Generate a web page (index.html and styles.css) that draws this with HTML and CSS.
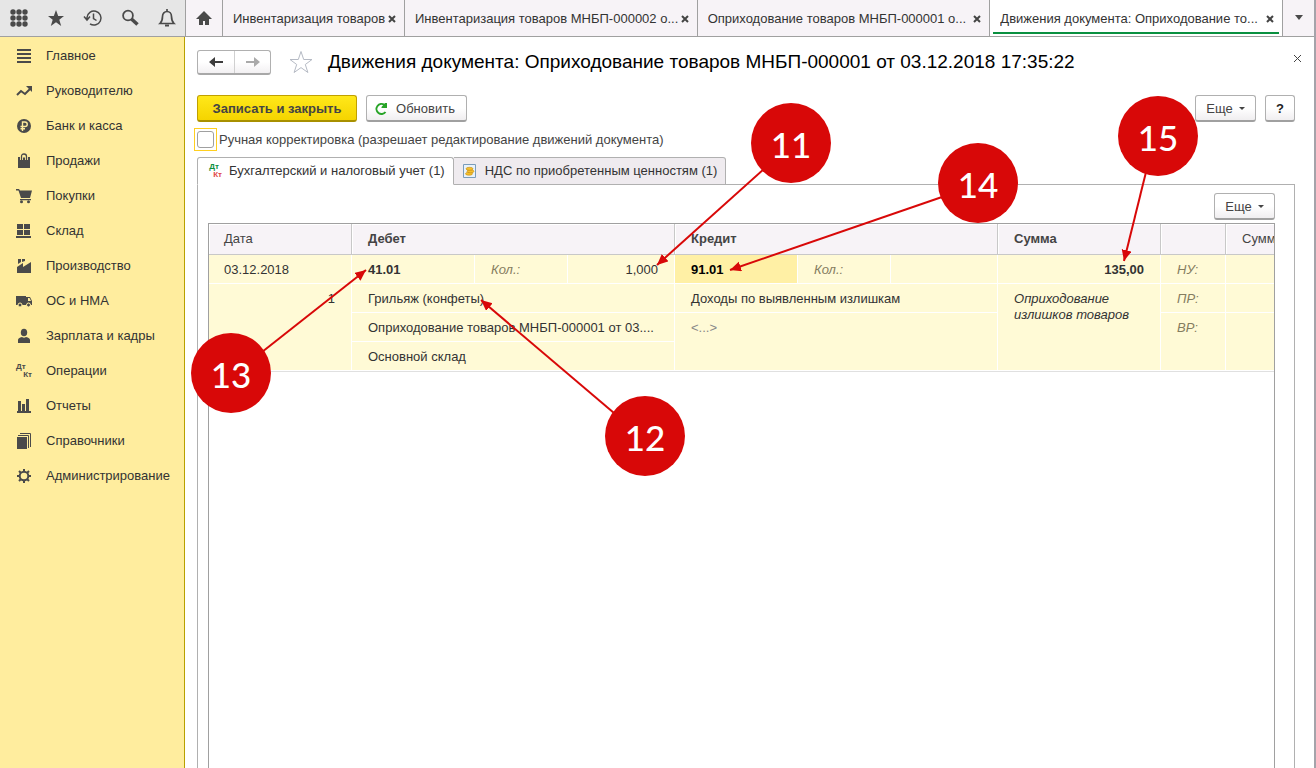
FILE: index.html
```html
<!DOCTYPE html>
<html lang="ru">
<head>
<meta charset="utf-8">
<title>Движения документа</title>
<link rel="stylesheet" href="styles.css">
</head>
<body>
<div class="window">
  <header class="topbar">
    <div class="tools">
      <button class="tool" aria-label="Меню"><svg width="20" height="20"><g fill="#4a4a4a"><circle cx="4" cy="4" r="2.700"/><circle cx="10" cy="4" r="2.700"/><circle cx="16" cy="4" r="2.700"/><circle cx="4" cy="10" r="2.700"/><circle cx="10" cy="10" r="2.700"/><circle cx="16" cy="10" r="2.700"/><circle cx="4" cy="16" r="2.700"/><circle cx="10" cy="16" r="2.700"/><circle cx="16" cy="16" r="2.700"/></g></svg></button>
      <button class="tool" aria-label="Избранное"><svg width="20" height="20"><path fill="#4a4a4a" d="M10 2l2.200 6H18l-4.700 3.700L15.200 18 10 14.200 4.800 18l1.900-6.300L2 8h5.800z"/></svg></button>
      <button class="tool" aria-label="История"><svg width="20" height="20" fill="none" stroke="#4a4a4a" stroke-width="1.500"><path d="M4 11V9.500A7 7 0 1 1 7 15.800M1 8.500l3 3.500 3-3.500M10.500 5.500v5l3 2"/></svg></button>
      <button class="tool" aria-label="Поиск"><svg width="20" height="20" fill="none" stroke="#4a4a4a"><circle cx="8" cy="7.500" r="4.900" stroke-width="1.800"/><path stroke-width="3.500" d="M11.500 11l6 5.500"/></svg></button>
      <button class="tool" aria-label="Уведомления"><svg width="20" height="20" fill="none" stroke="#4a4a4a" stroke-width="1.700"><path d="M3 15.500h14c-2-2-2.500-3.500-2.500-7 0-3-2-5-4.500-5s-4.500 2-4.500 5c0 3.500-.5 5-2.500 7zM10 1v3"/><path d="M8 17.500h4" stroke-width="2"/></svg></button>
    </div>
    <nav class="tabs">
      <button class="tab home" aria-label="Начальная страница"><svg width="16" height="16"><path fill="#4a4a4a" d="M8 1L0 9h3v6h4v-4h2v4h4V9h3z"/></svg></button>
      <div class="tab short"><span>Инвентаризация товаров</span><button class="close" aria-label="Закрыть"><svg width="8" height="8"><path d="M1 1l6 6M7 1L1 7"/></svg></button></div>
      <div class="tab"><span>Инвентаризация товаров МНБП-000002 о...</span><button class="close" aria-label="Закрыть"><svg width="8" height="8"><path d="M1 1l6 6M7 1L1 7"/></svg></button></div>
      <div class="tab"><span>Оприходование товаров МНБП-000001 о...</span><button class="close" aria-label="Закрыть"><svg width="8" height="8"><path d="M1 1l6 6M7 1L1 7"/></svg></button></div>
      <div class="tab active"><span>Движения документа: Оприходование то...</span><button class="close" aria-label="Закрыть"><svg width="8" height="8"><path d="M1 1l6 6M7 1L1 7"/></svg></button></div>
      <button class="tab more" aria-label="Список окон"><svg width="10" height="6"><path fill="#4a4a4a" d="M1 0h8L5 5z"/></svg></button>
    </nav>
  </header>
  <div class="body">
    <aside class="sidebar">
      <a href="#"><svg width="16" height="16"><path fill="#4a4a4a" d="M1 1h14v2H1zM1 5h14v2H1zM1 9h14v2H1zM1 13h14v2H1z"/></svg>Главное</a>
      <a href="#"><svg width="16" height="16"><path fill="none" stroke="#4a4a4a" stroke-width="2" d="M1 12l4-4 4 3 5-5"/><path fill="#4a4a4a" d="M10 3h6v6z"/></svg>Руководителю</a>
      <a href="#"><svg width="16" height="16"><circle cx="8" cy="8" r="7" fill="#4a4a4a"/><path fill="none" stroke="#ffed9e" stroke-width="1.400" d="M6.500 13V4H9a2.200 2.200 0 0 1 0 4.500H4.500M4.500 10.700H9"/></svg>Банк и касса</a>
      <a href="#"><svg width="16" height="16"><path fill="#4a4a4a" d="M2 4h12v11H2z"/><path fill="none" stroke="#ffed9e" stroke-width="3" d="M5.500 7V3h5v4"/><path fill="none" stroke="#4a4a4a" stroke-width="1.300" d="M5.500 7V3.500Q5.500 1 8 1t2.500 2.500V7"/></svg>Продажи</a>
      <a href="#"><svg width="16" height="16"><path fill="#4a4a4a" d="M0 1h3l1 1.500h12L14 10H5L2.500 2.500H0zM4 11h11v1.200H4z"/><circle cx="5.500" cy="13.800" r="1.500" fill="#4a4a4a"/><circle cx="12.500" cy="13.800" r="1.500" fill="#4a4a4a"/></svg>Покупки</a>
      <a href="#"><svg width="16" height="16"><path fill="#4a4a4a" d="M1 1h6v5H1zM8 1h6v5H8zM1 7h6v5H1zM8 7h6v5H8zM0 13h15v2H0z"/></svg>Склад</a>
      <a href="#"><svg width="16" height="16"><path fill="#4a4a4a" d="M1 15V9l6-4v4l8-5v11zM2 1h3v3L2 6zM6 1h3v2L6 4z"/></svg>Производство</a>
      <a href="#"><svg width="16" height="16"><path fill="#4a4a4a" d="M0 3h10v9H0zM10 4h4l2 4v4h-6z"/><path fill="#ffed9e" d="M12 5h1.500l1.500 3h-3z"/><circle cx="4" cy="12" r="2" fill="#4a4a4a" stroke="#ffed9e"/><circle cx="12.500" cy="12" r="2" fill="#4a4a4a" stroke="#ffed9e"/></svg>ОС и НМА</a>
      <a href="#"><svg width="16" height="16"><ellipse cx="8" cy="4.500" rx="3.200" ry="3.800" fill="#4a4a4a"/><path fill="#4a4a4a" d="M2 15v-3q0-2 4-3 2 1.500 4 0 4 1 4 3v3z"/></svg>Зарплата и кадры</a>
      <a href="#"><span class="dtkt"><b>Дт</b><b>Кт</b></span>Операции</a>
      <a href="#"><svg width="16" height="16"><path fill="#4a4a4a" d="M2 3h3v11H2zM6 6h3v8H6zM10 1h3v13h-3zM1 13h14v2H1z"/></svg>Отчеты</a>
      <a href="#"><svg width="16" height="16"><path fill="#4a4a4a" d="M1 4h10v12H1z"/><path fill="none" stroke="#4a4a4a" d="M2 2.500h10.500V15M4 .5h10.500V14"/></svg>Справочники</a>
      <a href="#"><svg width="16" height="16"><g fill="none" stroke="#4a4a4a"><circle cx="8" cy="8" r="4.300" stroke-width="2"/><path stroke-width="2" d="M8 1v3M8 12v3M1 8h3M12 8h3M3 3l2 2M11 11l2 2M3 13l2-2M11 5l2-2"/></g></svg>Администрирование</a>
    </aside>
    <main class="main">
      <div class="titlebar">
        <div class="nav"><button aria-label="Назад"><svg width="14" height="12"><path fill="#3c3c3c" d="M0 6l6-5v4h8v2H6v4z"/></svg></button><button aria-label="Вперед"><svg width="14" height="12"><path fill="#aaa" d="M14 6L8 1v4H0v2h8v4z"/></svg></button></div>
        <svg class="star" width="24" height="24"><path fill="#fff" stroke="#b5bac4" d="M12 1.500l2.700 8H23l-6.700 5 2.600 8L12 17.600 5.100 22.500l2.600-8L1 9.500h8.300z"/></svg>
        <h1>Движения документа: Оприходование товаров МНБП-000001 от 03.12.2018 17:35:22</h1>
        <button class="dismiss" aria-label="Закрыть"><svg width="9" height="9"><path fill="none" stroke="#444" d="M1 1l7 7M8 1L1 8"/></svg></button>
      </div>
      <div class="commands">
        <button class="btn primary">Записать и закрыть</button>
        <button class="btn refresh"><svg width="14" height="14"><path fill="none" stroke="#28a428" stroke-width="2" d="M10.500 3A5 5 0 1 0 11.500 10"/><path fill="#28a428" d="M7.500 6V5L11 1h2v5z"/></svg>Обновить</button>
        <button class="btn drop">Еще<svg width="6" height="4"><path fill="#444" d="M0 0h6L3 3z"/></svg></button>
        <button class="btn help">?</button>
      </div>
      <label class="manual"><span class="focus"><input type="checkbox"></span>Ручная корректировка (разрешает редактирование движений документа)</label>
      <div class="pages">
        <button class="page current"><span class="dtkt color"><b>Дт</b><b>Кт</b></span>Бухгалтерский и налоговый учет (1)</button>
        <button class="page"><svg width="14" height="14"><path fill="#e8f2fa" stroke="#7a9cba" d="M.5.500h12v13H.5z"/><g fill="#f5c02c" stroke="#c48a12" stroke-width=".6"><ellipse cx="6" cy="9.700" rx="3.500" ry="1.500"/><ellipse cx="7.500" cy="7.300" rx="3.500" ry="1.500"/><ellipse cx="6.500" cy="4.800" rx="3.500" ry="1.500"/></g></svg>НДС по приобретенным ценностям (1)</button>
      </div>
      <section class="panel">
        <div class="gridbar"><button class="btn drop">Еще<svg width="6" height="4"><path fill="#444" d="M0 0h6L3 3z"/></svg></button></div>
        <div class="grid">
          <table>
            <colgroup><col class="c-date"><col class="c-acc"><col class="c-qty"><col class="c-val"><col class="c-acc"><col class="c-qty"><col class="c-val"><col class="c-sum"><col class="c-kind"><col></colgroup>
            <thead><tr><th class="plain">Дата</th><th colspan="3">Дебет</th><th colspan="3">Кредит</th><th>Сумма</th><th></th><th class="plain last">Сумм</th></tr></thead>
            <tbody>
              <tr><td>03.12.2018</td><td class="bold">41.01</td><td class="hint">Кол.:</td><td class="num">1,000</td><td class="bold selected">91.01</td><td class="hint">Кол.:</td><td></td><td class="num bold">135,00</td><td class="hint">НУ:</td><td class="last"></td></tr>
              <tr><td class="num" rowspan="3">1</td><td colspan="3">Грильяж (конфеты)</td><td colspan="3">Доходы по выявленным излишкам</td><td class="note" rowspan="3">Оприходование<br>излишков товаров</td><td class="hint">ПР:</td><td class="last"></td></tr>
              <tr><td colspan="3">Оприходование товаров МНБП-000001 от 03....</td><td colspan="3" rowspan="2" class="empty">&lt;...&gt;</td><td class="hint" rowspan="2">ВР:</td><td class="last" rowspan="2"></td></tr>
              <tr><td colspan="3">Основной склад</td></tr>
            </tbody>
          </table>
        </div>
      </section>
    </main>
  </div>
  <svg class="arrows" width="1316" height="768">
    <defs><marker id="head" markerUnits="userSpaceOnUse" markerWidth="12" markerHeight="12" refX="11" refY="5" orient="auto"><path fill="#d80808" d="M0 0l11 5-11 5z"/></marker></defs>
    <g stroke="#d80808" stroke-width="2" marker-end="url(#head)">
      <path d="M764 169L657 265"/><path d="M942 197L730 270"/><path d="M1146 172L1124 261"/><path d="M262 352L366 270"/><path d="M614 413L481 300"/>
    </g>
  </svg>
  <span class="pin p11">11</span><span class="pin p12">12</span><span class="pin p13">13</span><span class="pin p14">14</span><span class="pin p15">15</span>
</div>
</body>
</html>
```
FILE: styles.css
```css
* { box-sizing: border-box; }
body { margin: 0; font: 13px/16px "Liberation Sans", Arial, sans-serif; color: #333; background: #fff; }
button { font: inherit; color: inherit; margin: 0; padding: 0; border: 0; background: none; }
svg { display: block; flex: none; }
.window { position: relative; display: flex; flex-direction: column; height: 100vh; overflow: hidden; border-right: 2px solid #a5a3aa; }
.topbar { display: flex; height: 37px; flex: none; border-bottom: 1px solid #a0a0a0; background: #f7f3f7; }
.tools { display: flex; width: 185px; flex: none; background: #e6e6e6; }
.tool { display: flex; flex: 1; align-items: center; justify-content: center; }
.tabs { display: flex; flex: 1; min-width: 0; }
.tab { display: flex; flex: 1 1 0; min-width: 0; align-items: center; justify-content: space-between; padding: 1px 8px 0 10px; border-left: 1px solid #a0a0a0; white-space: nowrap; }
.tab span { overflow: hidden; }
.tab.home { flex: 0 0 37px; justify-content: center; padding: 0; }
.tab.short { flex: 0 0 182px; }
.tab.more { flex: 0 0 32px; justify-content: center; padding: 0; }
.tab.active { position: relative; background: #fff; }
.tab.active::after { content: ""; position: absolute; left: 3px; right: 3px; bottom: 2px; height: 2px; background: #0a9040; }
.close path { fill: none; stroke: #444; stroke-width: 2; }
.body { display: flex; flex: 1; min-height: 0; }
.sidebar { width: 185px; flex: none; padding-top: 1px; background: #ffed9e; border-right: 1px solid #b8a000; }
.sidebar a { display: flex; align-items: center; gap: 14px; height: 35px; padding-left: 16px; color: #333; text-decoration: none; }
.dtkt { display: flex; flex-direction: column; width: 16px; font-size: 8px; line-height: 8px; color: #4a4a4a; }
.dtkt b:last-child { align-self: flex-end; }
.dtkt.color b:first-child { color: #0a9040; }
.dtkt.color b:last-child { color: #e04848; }
.main { display: flex; flex: 1; flex-direction: column; min-width: 0; padding: 12px 19px 0 12px; }
.titlebar { display: flex; align-items: center; height: 26px; }
.nav { display: flex; border: 1px solid #b0b0b0; border-bottom: 2px solid #a8a8a8; border-radius: 3px; background: linear-gradient(#fff 50%, #f2f0f2); }
.nav button { display: flex; align-items: center; justify-content: center; width: 36px; height: 22px; }
.nav button + button { border-left: 1px solid #d0d0d0; }
.star { margin: 0 15px 0 18px; }
h1 { flex: 1; margin: 0; font-size: 19px; line-height: 26px; font-weight: 400; color: #000; white-space: nowrap; }
.dismiss { align-self: flex-start; margin-right: -12px; padding: 5px; }
.commands { display: flex; gap: 9px; margin-top: 20px; }
.btn { display: flex; align-items: center; justify-content: center; height: 27px; padding: 1px 0 0; border: 1px solid #b0b0b0; border-bottom: 2px solid #a0a0a0; border-radius: 3px; background: linear-gradient(#fff 50%, #f0eef0); color: #444; }
.btn.primary { width: 160px; border-color: #c0a000; border-bottom-color: #a89000; background: linear-gradient(#ffe81a, #f5d400); font-weight: 700; }
.btn.refresh { width: 101px; gap: 8px; padding-right: 4px; }
.btn.drop { width: 61px; gap: 6px; }
.commands .drop { margin-left: auto; }
.btn.help { width: 30px; color: #222; font-weight: 700; }
.manual { display: flex; align-items: center; gap: 2px; margin: 6px 0 6px -3px; color: #444; }
.focus { display: block; padding: 2px; border: 1px solid #ffcf20; }
.focus input { display: block; appearance: none; width: 17px; height: 17px; margin: 0; border: 1px solid #a0a0a0; border-radius: 3px; }
.pages { display: flex; position: relative; height: 28px; margin-bottom: -1px; }
.page { display: flex; align-items: center; gap: 8px; padding: 0 8px 0 9px; border: 1px solid #b0b0b0; border-left-width: 0; border-radius: 0 3px 0 0; background: #efebef; white-space: nowrap; }
.page.current { gap: 7px; padding-left: 8px; border-left-width: 1px; border-bottom-color: #fff; border-radius: 3px 3px 0 0; background: #fff; }
.panel { display: flex; flex: 1; flex-direction: column; min-height: 0; padding: 8px 19px 0 10px; border: 1px solid #b0b0b0; border-bottom: 0; }
.gridbar { display: flex; justify-content: flex-end; margin-bottom: 3px; }
.grid { flex: 1; overflow: hidden; border: 1px solid #a0a0a0; border-bottom: 0; }
table { width: 100%; table-layout: fixed; border-collapse: separate; border-spacing: 0; }
.c-date { width: 143px; } .c-acc { width: 123px; } .c-qty { width: 93px; } .c-val { width: 107px; } .c-sum { width: 163px; } .c-kind { width: 65px; }
th { height: 31px; padding: 0 16px; border-right: 1px solid #c8c8c8; border-bottom: 1px solid #c8c8c8; background: #f7f3f7; box-shadow: inset 1px 1px #fff; text-align: left; color: #444; }
th.plain { font-weight: 400; }
td { height: 29px; padding: 7px 16px 5px; border-right: 1px solid #fff; border-bottom: 1px solid #fff; background: #fffad6; vertical-align: top; white-space: nowrap; }
th:first-child, td:first-child:not([colspan]) { padding-left: 15px; }
th.last, td.last { padding-right: 0; border-right: 0; white-space: nowrap; }
td.num { text-align: right; }
.bold { font-weight: 700; }
td.selected { background: #fff0a5; color: #000; }
td.hint { font-style: italic; color: #857d60; }
td.note { font-style: italic; }
td.empty { color: #888; }
tbody { box-shadow: 0 1px #e0e0e0; }
.arrows { position: absolute; left: 0; top: 0; }
.pin { position: absolute; width: 80px; height: 80px; border-radius: 50%; background: #d80808; color: #fff; font: 500 35px/82px Lato, sans-serif; text-align: center; }
.p11 { left: 751px; top: 103px; }
.p12 { left: 605px; top: 396px; }
.p13 { left: 191px; top: 333px; }
.p14 { left: 938px; top: 143px; }
.p15 { left: 1118px; top: 96px; }
```
